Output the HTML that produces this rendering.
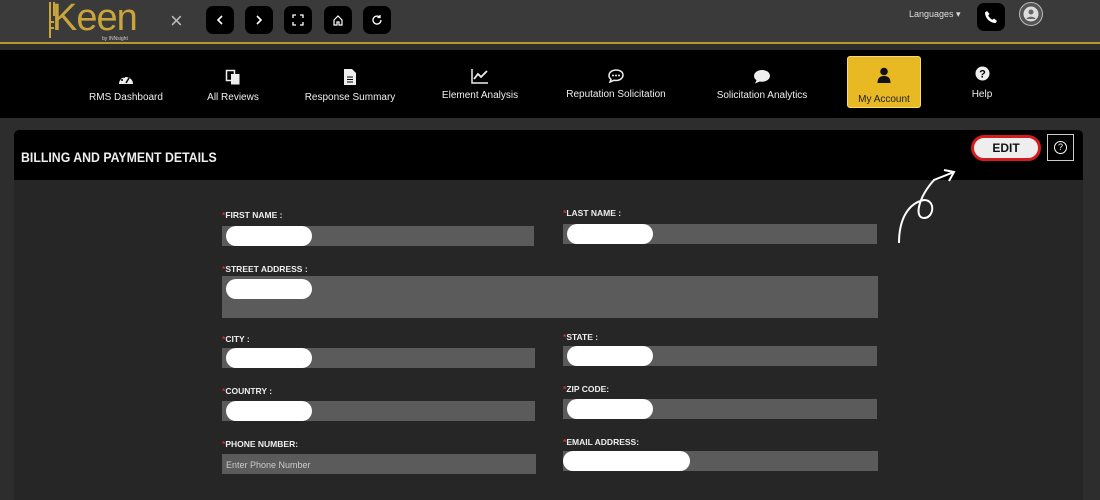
<!DOCTYPE html>
<html><head><style>
*{margin:0;padding:0;box-sizing:border-box}
body{width:1100px;height:500px;overflow:hidden;background:#2d2d2d;font-family:"Liberation Sans",sans-serif;position:relative;color:#fff}
.a{position:absolute}
.top{left:0;top:0;width:1100px;height:44px;background:#3a3a3a;border-bottom:2px solid #b8962e}
.btn{width:28px;height:28px;background:#000;border-radius:7px;top:6px;display:flex;align-items:center;justify-content:center}
.nav{left:0;top:50px;width:1100px;height:68px;background:#000}
.ni{text-align:center;font-size:10px;color:#eee}
.ni svg{display:block;margin:0 auto 6px}
.card{left:14px;top:130px;width:1069px;height:370px;background:#262626;border-radius:5px 5px 0 0;overflow:hidden}
.ch{left:0;top:0;width:1069px;height:50px;background:#000}
.lb{font-size:8.5px;color:#eee;font-weight:bold}
.lb:before{content:"*";color:#c33}
.in{background:#5b5b5b;height:20px}
.bl{background:#fff;border-radius:10px;height:20px;top:0;left:4px;width:86px}
</style></head><body>
<div class="a top"></div>
<svg class="a" style="left:47px;top:2px" width="10" height="36" viewBox="0 0 10 36"><path d="M3 0v36M7 0v14M3 20h4M3 26h4" stroke="#c9a53a" stroke-width="2"/></svg>
<div class="a" style="left:52px;top:-3px;font-size:38px;color:#c9a53a;letter-spacing:-1px">Keen</div>
<div class="a" style="left:102px;top:36px;font-size:5px;color:#ccc">by INNsight</div>
<div class="a" style="left:170px;top:8px;font-size:22px;color:#bbb">×</div>
<div class="a btn" style="left:206px"><svg width="12" height="12" viewBox="0 0 12 12"><path d="M8 2L4 6l4 4" stroke="#fff" stroke-width="1.6" fill="none"/></svg></div>
<div class="a btn" style="left:245px"><svg width="12" height="12" viewBox="0 0 12 12"><path d="M4 2l4 4-4 4" stroke="#fff" stroke-width="1.6" fill="none"/></svg></div>
<div class="a btn" style="left:284px"><svg width="12" height="12" viewBox="0 0 12 12"><path d="M1 4V1h3M8 1h3v3M11 8v3H8M4 11H1V8" stroke="#fff" stroke-width="1.3" fill="none"/></svg></div>
<div class="a btn" style="left:324px"><svg width="12" height="12" viewBox="0 0 12 12"><path d="M2 6L6 2l4 4v5H7V8H5v3H2z" stroke="#fff" stroke-width="1.2" fill="none"/></svg></div>
<div class="a btn" style="left:363px"><svg width="12" height="12" viewBox="0 0 12 12"><path d="M10 6a4 4 0 1 1-1.2-2.8M9 1v2.5H6.5" stroke="#fff" stroke-width="1.3" fill="none"/></svg></div>
<div class="a" style="left:909px;top:9px;font-size:9px;color:#ddd">Languages ▾</div>
<div class="a btn" style="left:977px;top:3px"><svg width="14" height="14" viewBox="0 0 14 14"><path d="M3 1l2.5 3-1.3 1.5c.8 1.8 2.4 3.4 4.3 4.3L10 8.5l3 2.5-1.5 2C6 13 1 8 1 2.5z" fill="#fff"/></svg></div>
<div class="a" style="left:1019px;top:2px;width:24px;height:24px;border:1.5px solid #bbb;border-radius:50%;display:flex;align-items:center;justify-content:center;background:#555"><svg width="16" height="16" viewBox="0 0 16 16"><circle cx="8" cy="8" r="7.5" fill="#ddd"/><circle cx="8" cy="6" r="2.5" fill="#666"/><path d="M3.5 13c1-3 8-3 9 0" fill="#666"/></svg></div>
<div class="a nav"></div>
<div class="a ni" style="left:76px;top:72px;width:100px"><svg width="16" height="14" viewBox="0 0 16 14"><path d="M1 12a7 7 0 1 1 14 0z" fill="#eee"/><path d="M8 11l3-5" stroke="#000" stroke-width="1.5"/><circle cx="4" cy="8" r="1" fill="#000"/><circle cx="6" cy="5" r="1" fill="#000"/></svg>RMS Dashboard</div>
<div class="a ni" style="left:183px;top:69px;width:100px"><svg width="16" height="17" viewBox="0 0 16 17"><rect x="1.5" y="1.5" width="8" height="10" fill="none" stroke="#eee" stroke-width="1.5"/><rect x="6" y="5" width="8.5" height="10.5" fill="#eee"/></svg>All Reviews</div>
<div class="a ni" style="left:290px;top:68px;width:120px"><svg width="14" height="18" viewBox="0 0 14 18"><path d="M1 1h8l4 4v12H1z" fill="#eee"/><path d="M4 9h6M4 11.5h6M4 14h6" stroke="#000"/></svg>Response Summary</div>
<div class="a ni" style="left:430px;top:68px;width:100px"><svg width="18" height="16" viewBox="0 0 18 16"><path d="M1 1v14h16" stroke="#eee" stroke-width="1.5" fill="none"/><path d="M3 11l4-5 3 3 6-6" stroke="#eee" stroke-width="1.8" fill="none"/></svg>Element Analysis</div>
<div class="a ni" style="left:556px;top:69px;width:120px"><svg width="16" height="14" viewBox="0 0 16 14"><path d="M8 1C4 1 1 3.5 1 6.5c0 1.5.7 2.8 2 3.8L2 13l4-1.7c.6.1 1.3.2 2 .2 4 0 7-2.5 7-5.5S12 1 8 1z" fill="none" stroke="#eee" stroke-width="1.5"/><circle cx="5" cy="6.5" r="1" fill="#eee"/><circle cx="8" cy="6.5" r="1" fill="#eee"/><circle cx="11" cy="6.5" r="1" fill="#eee"/></svg>Reputation Solicitation</div>
<div class="a ni" style="left:702px;top:69px;width:120px"><svg width="18" height="15" viewBox="0 0 18 15"><path d="M9 1C4.5 1 1 3.7 1 7c0 1.7 1 3.2 2.5 4.3L2 14.5l4.8-2c.7.2 1.4.3 2.2.3 4.5 0 8-2.7 8-6S13.5 1 9 1z" fill="#eee"/></svg>Solicitation Analytics</div>
<div class="a" style="left:847px;top:56px;width:74px;height:52px;background:#e8b923;border:1px solid #f5d97a;border-radius:3px;text-align:center;font-size:10px;color:#222;padding-top:10px"><svg width="14" height="16" viewBox="0 0 14 16" style="display:block;margin:0 auto 11px"><circle cx="7" cy="4.5" r="3.8" fill="#111"/><path d="M0.5 16c0-5 2.5-7 6.5-7s6.5 2 6.5 7z" fill="#111"/></svg>My Account</div>
<div class="a ni" style="left:952px;top:66px;width:60px"><svg width="15" height="15" viewBox="0 0 15 15" style="margin-bottom:8px"><circle cx="7.5" cy="7.5" r="7" fill="#eee"/><text x="7.5" y="11.5" text-anchor="middle" font-size="11" font-weight="bold" fill="#000" font-family="Liberation Sans">?</text></svg>Help</div>
<div class="a card">
<div class="a ch"></div>
<div class="a" style="left:7px;top:19px;font-size:14px;font-weight:bold;color:#eee;transform:scaleX(.88);transform-origin:left">BILLING AND PAYMENT DETAILS</div>
<div class="a" style="left:957px;top:5px;width:70px;height:26px;border:3px solid #d31c1c;border-radius:13px;background:#eee;color:#111;font-weight:bold;font-size:12px;text-align:center;line-height:20px">EDIT</div>
<div class="a" style="left:1033px;top:4px;width:27px;height:27px;border:1px solid #ccc;display:flex;align-items:center;justify-content:center"><div style="width:13px;height:13px;border:1.3px solid #fff;border-radius:50%;font-size:9px;text-align:center;line-height:11px">?</div></div>
<svg class="a" style="left:880px;top:38px" width="70" height="80" viewBox="0 0 70 80"><path d="M5 75C5 50 15 35 30 32c12 0 10 18 0 18S24 30 40 12l20-8M50 2l10 2-5 9" stroke="#fff" stroke-width="2" fill="none"/></svg>
</div>
<div class="a lb" style="left:222px;top:210px">FIRST NAME :</div>
<div class="a in" style="left:222px;top:226px;width:312px"><div class="a bl"></div></div>
<div class="a lb" style="left:563px;top:208px">LAST NAME :</div>
<div class="a in" style="left:563px;top:224px;width:314px"><div class="a bl"></div></div>
<div class="a lb" style="left:222px;top:264px">STREET ADDRESS :</div>
<div class="a in" style="left:222px;top:276px;width:656px;height:42px"><div class="a bl" style="top:3px"></div></div>
<div class="a lb" style="left:222px;top:334px">CITY :</div>
<div class="a in" style="left:222px;top:348px;width:313px"><div class="a bl"></div></div>
<div class="a lb" style="left:563px;top:332px">STATE :</div>
<div class="a in" style="left:563px;top:346px;width:314px"><div class="a bl"></div></div>
<div class="a lb" style="left:222px;top:386px">COUNTRY :</div>
<div class="a in" style="left:222px;top:401px;width:313px"><div class="a bl"></div></div>
<div class="a lb" style="left:563px;top:384px">ZIP CODE:</div>
<div class="a in" style="left:563px;top:399px;width:314px"><div class="a bl"></div></div>
<div class="a lb" style="left:222px;top:439px">PHONE NUMBER:</div>
<div class="a in" style="left:222px;top:454px;width:314px;font-size:9px;color:#ccc;padding:6px 4px">Enter Phone Number</div>
<div class="a lb" style="left:563px;top:437px">EMAIL ADDRESS:</div>
<div class="a in" style="left:563px;top:451px;width:315px"><div class="a bl" style="left:0;width:127px"></div></div>
</body></html>
